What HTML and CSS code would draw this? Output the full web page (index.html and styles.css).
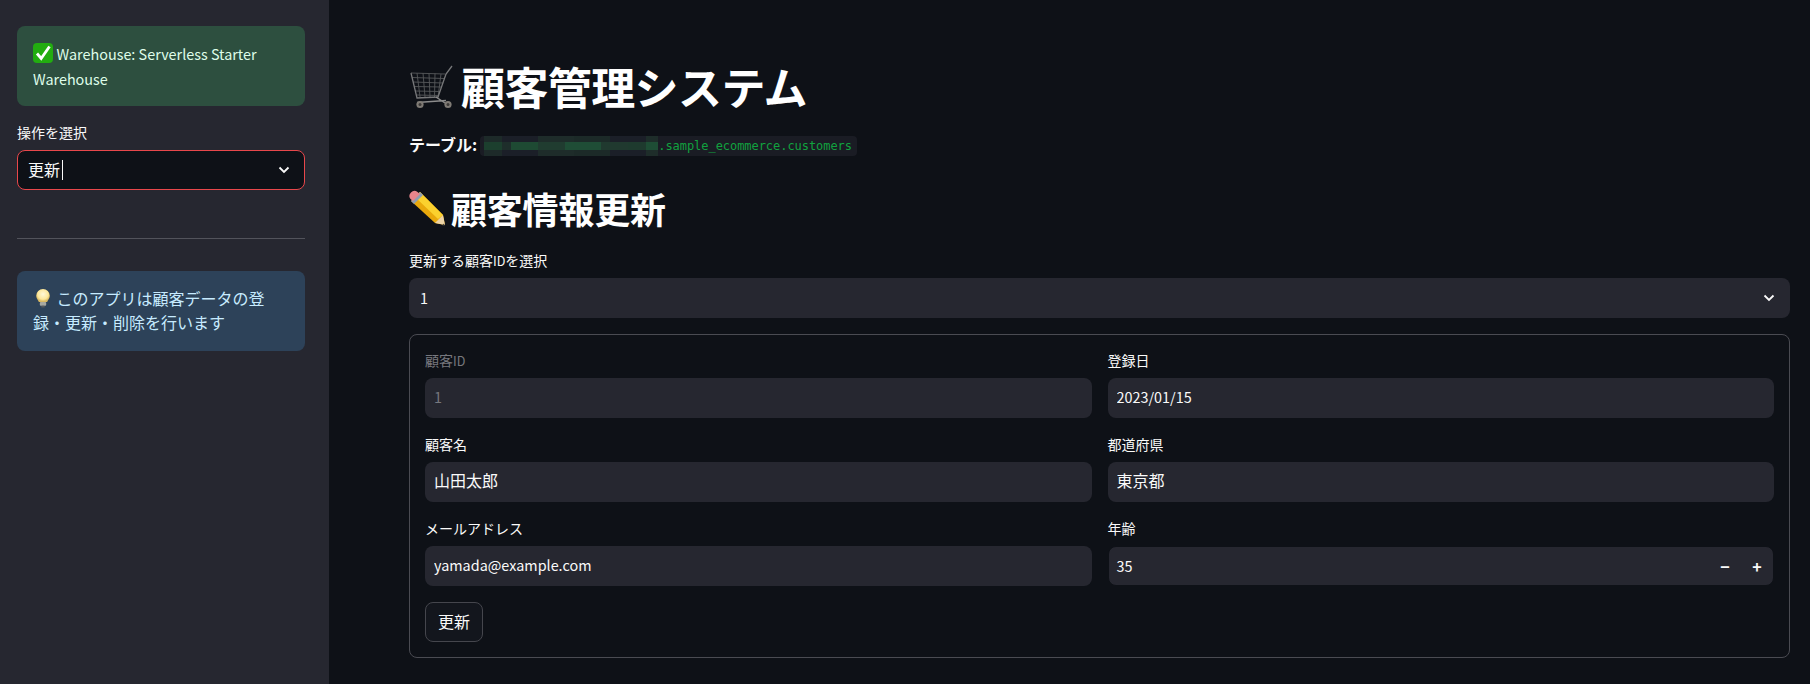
FILE: index.html
```html
<!DOCTYPE html>
<html lang="ja">
<head>
    <meta charset="UTF-8">
    <title>顧客管理システム</title>
    <link rel="stylesheet" href="styles.css">
</head>
<body>
    <div class="app">
        <aside class="sidebar">
            <div class="alert alert-success">
                <svg class="emoji" viewBox="0 0 20 20"><rect x="0" y="0" width="20" height="20" rx="4" fill="#22ad10"/><path d="M4 10.5l4.2 5L16.5 3.5" fill="none" stroke="#fff" stroke-width="2.8"/></svg>
                <span class="latin">Warehouse: Serverless Starter Warehouse</span>
            </div>
            <div class="field side-field">
                <label class="field-label">操作を選択</label>
                <div class="select select-focus">
                    <span class="select-value">更新</span><span class="caret"></span>
                    <svg class="chevron" viewBox="0 0 12 8"><path d="M1.5 1.5L6 6l4.5-4.5" fill="none" stroke="#fafafa" stroke-width="1.8"/></svg>
                </div>
            </div>
            <hr class="divider">
            <div class="alert alert-info">
                <svg class="emoji" viewBox="0 0 20 22">
                    <defs><radialGradient id="glow" cx="50%" cy="40%" r="55%"><stop offset="0" stop-color="#fff8d8"/><stop offset="0.7" stop-color="#fde79a"/><stop offset="1" stop-color="#d9b860"/></radialGradient></defs>
                    <path d="M10 1a7.5 7.5 0 0 0-7.5 7.5c0 3 2 4.5 3 7h9c1-2.5 3-4 3-7A7.5 7.5 0 0 0 10 1z" fill="url(#glow)"/>
                    <rect x="6.5" y="15.5" width="7" height="4" rx="1" fill="#a9a9a0"/>
                    <rect x="8" y="19.5" width="4" height="2" rx="1" fill="#55585c"/>
                </svg>
                このアプリは顧客データの登録・更新・削除を行います
            </div>
        </aside>
        <main class="main">
            <h1 class="title">
                <svg class="icon-cart" viewBox="0 0 44 46">
                    <path d="M2 10L36 11M3 14.5L35 15.5M4 19L34 20M5 23.5L33 24M6 28L31 28.5M7.5 32L30 32.5M8 10L11 34M14 10L16 34M20 10.5L21 34M26 10.5L25.5 34M32 11L29 34" stroke="#56585a" stroke-width="0.9" fill="none"/>
                    <path d="M2 10L8 35L29 34L37 11L43 3" stroke="#77787a" stroke-width="1.3" fill="none"/>
                    <path d="M8 39.5L37 37.5M27 34L36 40" stroke="#8c8c8c" stroke-width="1.5" fill="none"/>
                    <circle cx="11" cy="41.5" r="3.6" fill="#7f7b75"/><circle cx="39" cy="41.5" r="3.6" fill="#7f7b75"/>
                    <circle cx="11" cy="41.5" r="1.5" fill="#3c3a38"/><circle cx="39" cy="41.5" r="1.5" fill="#3c3a38"/>
                </svg>
                顧客管理システム
            </h1>
            <div class="table-line">
                <strong>テーブル:</strong>
                <code class="table-code"><span class="mosaic"><i class="tiles-a"></i><i class="tiles-b"></i><i class="tiles-a"></i></span>.sample_ecommerce.customers</code>
            </div>
            <h2 class="subtitle">
                <svg class="icon-pencil" viewBox="0 0 36 36">
                    <path d="M11 2l23 23 2 10-10-2L2 11z" fill="#e9a90c"/>
                    <path d="M11 2l23 23-5 4L6 7z" fill="#fbd12e"/>
                    <path d="M2 11L11 2 14 5 5 14z" fill="#8e9db0"/>
                    <path d="M1.5 9a5 5 0 0 1 7-7L11 4 4 11z" fill="#e8858c"/>
                    <path d="M26 33l8-8 2 10z" fill="#ecd3a6"/><path d="M33 35.5l2-2 .8 2.5z" fill="#333"/>
                </svg>
                顧客情報更新
            </h2>
            <div class="field">
                <label class="field-label">更新する顧客<span class="latin">ID</span>を選択</label>
                <div class="select">
                    <span class="select-value latin">1</span>
                    <svg class="chevron" viewBox="0 0 12 8"><path d="M1.5 1.5L6 6l4.5-4.5" fill="none" stroke="#fafafa" stroke-width="1.8"/></svg>
                </div>
            </div>
            <form class="form-box">
                <div class="form-grid">
                    <div class="field field-disabled">
                        <label class="field-label">顧客<span class="latin">ID</span></label>
                        <input class="text-input latin-input" value="1" disabled>
                    </div>
                    <div class="field">
                        <label class="field-label">登録日</label>
                        <input class="text-input latin-input" value="2023/01/15">
                    </div>
                    <div class="field">
                        <label class="field-label">顧客名</label>
                        <input class="text-input" value="山田太郎">
                    </div>
                    <div class="field">
                        <label class="field-label">都道府県</label>
                        <input class="text-input" value="東京都">
                    </div>
                    <div class="field">
                        <label class="field-label">メールアドレス</label>
                        <input class="text-input latin-input" value="yamada@example.com">
                    </div>
                    <div class="field">
                        <label class="field-label">年齢</label>
                        <div class="number-input">
                            <span class="number-value latin">35</span>
                            <span class="step">−</span>
                            <span class="step">+</span>
                        </div>
                    </div>
                </div>
                <button type="button" class="submit">更新</button>
            </form>
        </main>
    </div>
</body>
</html>
```
FILE: styles.css
```css
* {
    box-sizing: border-box;
}
body {
    margin: 0;
    background-color: #0e1117;
    color: #fafafa;
    font-family: "Noto Sans CJK JP", "Noto Sans", sans-serif;
    font-size: 16px;
    overflow: hidden;
}
.latin {
    font-size: 0.9em;
}
.app {
    display: flex;
    height: 684px;
}
.sidebar {
    width: 329px;
    flex-shrink: 0;
    padding: 26px 24px 0 17px;
    background-color: #262730;
}
.alert {
    padding: 15px 16px;
    border-radius: 8px;
    line-height: 24px;
    height: 80px;
}
.alert-success {
    background-color: #2d4f3f;
    color: #dffde9;
}
.alert-info {
    background-color: #2d4259;
    color: #c7ebff;
}
.emoji {
    width: 20px;
    height: 20px;
    vertical-align: -3px;
}
.side-field {
    margin-top: 16px;
}
.field-label {
    display: block;
    height: 28px;
    font-size: 14px;
    line-height: 20px;
}
.select {
    display: flex;
    align-items: center;
    height: 40px;
    padding: 0 10px;
    border: 1px solid transparent;
    border-radius: 8px;
    background-color: #262730;
}
.select-value {
    padding-bottom: 2px;
}
.select-focus {
    background-color: #0e1117;
    border-color: #e8474b;
}
.caret {
    width: 1px;
    height: 20px;
    margin-left: 2px;
    background-color: #fafafa;
}
.chevron {
    width: 12px;
    height: 8px;
    margin-left: auto;
    margin-right: 4px;
}
.divider {
    margin: 48px 0 32px;
    border: none;
    border-top: 1px solid #52535b;
}
.main {
    flex: 1;
    min-width: 0;
    padding: 54px 20px 0 80px;
}
.title {
    display: flex;
    align-items: center;
    gap: 8px;
    margin: 0;
    font-size: 44px;
    line-height: 64px;
    font-weight: 700;
    letter-spacing: -0.6px;
    color: #fff;
}
.icon-cart {
    width: 44px;
    height: 46px;
}
.table-line {
    display: flex;
    align-items: center;
    gap: 3px;
    margin-top: 14px;
    height: 24px;
    line-height: 24px;
}
.table-code {
    display: flex;
    align-items: center;
    height: 20px;
    margin-top: 4px;
    padding: 0 5px 0 4px;
    border-radius: 4px;
    background-color: #1a1c24;
    color: #11a23f;
    font-family: "DejaVu Sans Mono", monospace;
    font-size: 12px;
    letter-spacing: -0.05px;
}
.mosaic {
    display: flex;
    flex-direction: column;
    width: 174px;
    height: 20px;
}
.mosaic i {
    display: block;
    flex: 1;
}
.mosaic .tiles-a {
    background: linear-gradient(90deg, #1d2a29 0 18px, #1b1f28 18px 54px, #1e2c2a 54px 90px, #1c2a28 90px 126px, #1b1f28 126px 162px, #1e2d2a 162px);
}
.mosaic .tiles-b {
    flex: 1.2;
    background: linear-gradient(90deg, #1c3f2e 0 18px, #1e2e2b 18px 27px, #1e4a33 27px 54px, #203c30 54px 81px, #1f4d36 81px 117px, #20392f 117px 144px, #1e3a2e 144px 162px, #1e4d35 162px);
}
.subtitle {
    display: flex;
    align-items: center;
    gap: 6px;
    margin: 26px 0 0;
    font-size: 36px;
    line-height: 52px;
    font-weight: 700;
    letter-spacing: -0.2px;
    color: #fff;
}
.icon-pencil {
    width: 36px;
    height: 36px;
}
.subtitle + .field {
    margin-top: 16px;
}
.form-box {
    height: 324px;
    margin-top: 16px;
    padding: 15px;
    border: 1px solid #4a4b52;
    border-radius: 8px;
}
.form-grid {
    display: grid;
    grid-template-columns: 1fr 1fr;
    gap: 16px;
}
.text-input {
    display: block;
    width: 100%;
    height: 40px;
    padding: 0 9px 4px;
    border: none;
    border-radius: 8px;
    outline: none;
    background-color: #262730;
    color: #fafafa;
    font-family: inherit;
    font-size: 16px;
}
.latin-input {
    padding-bottom: 3px;
    font-size: 14.4px;
}
.field-disabled .field-label,
.field-disabled .text-input {
    color: #77787e;
}
.number-input {
    display: flex;
    align-items: center;
    height: 40px;
    padding: 0 0 0 8px;
    border: 1px solid #0e1117;
    border-radius: 8px;
    background-color: #262730;
}
.number-value {
    flex: 1;
    padding-bottom: 2px;
}
.step {
    width: 32px;
    text-align: center;
    font-weight: 700;
}
.submit {
    display: block;
    width: 58px;
    height: 40px;
    margin-top: 16px;
    padding: 0 0 3px;
    border: 1px solid #45464d;
    border-radius: 8px;
    background-color: #13161d;
    color: #fafafa;
    font-family: inherit;
    font-size: 16px;
}
```
